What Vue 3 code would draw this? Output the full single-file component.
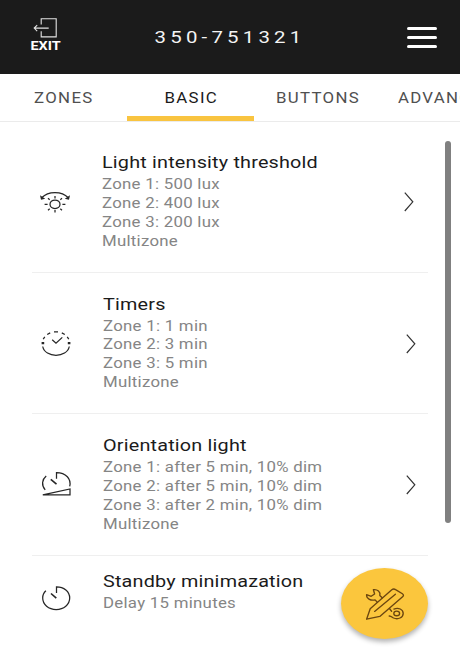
<template>
  <div class="app">
    <header class="topbar">
      <button class="exit">
        <svg width="28" height="21" viewBox="0 0 28 21" fill="none" stroke="#e4e4e4" stroke-width="1.1">
          <path d="M10.2 6.5V.7h15v18.2h-15v-5.6M17.7 10.1H3.2M6.2 7.1L3.2 10.1l3 3" />
        </svg>
        <span class="exit-text">EXIT</span>
      </button>
      <h1 class="device">350-751321</h1>
      <button class="menu">
        <span></span>
        <span></span>
        <span></span>
      </button>
    </header>

    <nav class="tabs">
      <button
        v-for="tab in tabs"
        :key="tab"
        class="tab"
        :class="{ active: tab === activeTab }"
        @click="activeTab = tab"
      >
        <span>{{ tab }}</span>
      </button>
    </nav>

    <main class="list">
      <div v-for="item in items" :key="item.icon" class="item" :class="item.icon">
        <svg class="item-icon" width="32" height="32" viewBox="0 0 32 32" fill="none" stroke="#262626" stroke-width="1.25">
          <template v-if="item.icon === 'light'">
            <ellipse cx="16" cy="18.3" rx="5" ry="4.2" />
            <path d="M16 10v2.4M16 24v2.6M5.6 18.3h3M23.4 18.3h3M9 12.2l1.7 1.5M23 12.2l-1.7 1.5M9 24.3l1.7-1.5M23 24.3l-1.7-1.5" />
            <path d="M3 11.5C9 4.9 23 4.9 29 11.5" />
            <path d="M1 9.2l1 4.6 4.2-1zM31 9.2l-1 4.6-4.2-1z" fill="#262626" stroke="none" />
          </template>
          <template v-else-if="item.icon === 'timers'">
            <path d="M2.7 19.5C5 31.2 27 31.2 29.3 19.5" />
            <path d="M14 4.8h4M7.2 7.5l3-1.6M21.8 5.9l3 1.6M3.2 12.2l1.6-2.4M27.2 9.8l1.6 2.4" />
            <path d="M12.2 12.7l3.8 3.5 6.3-5.8" />
            <path d="M1.6 16.2h2.6M27.8 16.2h2.6" stroke-width="2.2" />
          </template>
          <template v-else-if="item.icon === 'orientation'">
            <path d="M5.2 20.8C1.2 16.2 2 10.5 6.2 7" />
            <path d="M16.5 9.8V3.6c9.5 0 15 6.6 13.2 13.7" />
            <path d="M10.8 10.3l5.7 4.9" stroke-width="1.6" />
            <path d="M2.8 25.8L30 20v5.9z" />
          </template>
          <template v-else>
            <path d="M16.5 12V5.8c7.4 0 13.2 4.7 13.2 11.2S23.8 28.5 16.2 28.5 2.7 23.5 2.7 17c0-3 1.1-5.4 3.2-7.2" />
            <path d="M11 12.5l5.3 4.7" stroke-width="1.6" />
          </template>
        </svg>
        <div class="item-body">
          <h2 class="item-title">{{ item.title }}</h2>
          <p v-for="line in item.lines" :key="line" class="item-line">{{ line }}</p>
        </div>
        <svg v-if="item.link" class="chevron" width="12" height="20" viewBox="0 0 12 20" fill="none" stroke="#333" stroke-width="1.2">
          <path d="M1.8 .6L9.8 9.8 1.8 19" />
        </svg>
      </div>
    </main>

    <div class="scrollbar"></div>

    <button class="fab">
      <svg width="40" height="34" viewBox="0 0 40 34" fill="none" stroke="#6b4610" stroke-width="1.35" stroke-linejoin="round" stroke-linecap="round">
        <path d="M1.6 32.2l3.6-10.4L26.8 2.8q1.8-1.5 3.8-.2l6.8 4.2q2 1.4.2 3L14.8 29.4z" />
        <path d="M9.6 24.4L30.4 7.2" />
        <path d="M12.3 15.2l-2.2-2.3C5.5 13.9 1.2 11.4 1.6 7.6l4.6 1.7 3.4-2.3-1.2-4.3c4-.6 7.4 2.2 6.4 5.7l2.4 2.4" />
        <path d="M24.6 21.8l2 2.4M24.2 29c2.3.2 2.7 1.1 4.4 2 4.4 2 9.6-.5 9.6-4.5 0-4.1-4.8-6.4-9.3-4.4" />
        <ellipse cx="31.7" cy="26.4" rx="2.9" ry="2.3" />
      </svg>
    </button>
  </div>
</template>

<script setup>
import { ref } from "vue";

const tabs = ["ZONES", "BASIC", "BUTTONS", "ADVANCED"];
const activeTab = ref("BASIC");

const items = [
  {
    icon: "light",
    title: "Light intensity threshold",
    lines: ["Zone 1: 500 lux", "Zone 2: 400 lux", "Zone 3: 200 lux", "Multizone"],
    link: true,
  },
  {
    icon: "timers",
    title: "Timers",
    lines: ["Zone 1: 1 min", "Zone 2: 3 min", "Zone 3: 5 min", "Multizone"],
    link: true,
  },
  {
    icon: "orientation",
    title: "Orientation light",
    lines: [
      "Zone 1: after 5 min, 10% dim",
      "Zone 2: after 5 min, 10% dim",
      "Zone 3: after 2 min, 10% dim",
      "Multizone",
    ],
    link: true,
  },
  {
    icon: "standby",
    title: "Standby minimazation",
    lines: ["Delay 15 minutes"],
    link: false,
  },
];
</script>

<style>
body {
  margin: 0;
}
</style>

<style scoped>
.app {
  position: relative;
  width: 460px;
  height: 661px;
  overflow: hidden;
  background-color: #fff;
  font-family: Roboto, "Liberation Sans", sans-serif;
}

button {
  padding: 0;
  border: none;
  background: none;
  font-family: inherit;
  cursor: pointer;
}

.topbar {
  display: grid;
  grid-template-columns: 90px 1fr 90px;
  align-items: center;
  height: 74px;
  background-color: #1b1b1b;
}

.exit {
  display: flex;
  flex-direction: column;
  align-items: center;
  margin-top: -3px;
}

.exit-text {
  margin-left: 1px;
  color: #fff;
  font-size: 12px;
  font-weight: 700;
  line-height: 14px;
  transform: scaleX(1.2);
}

.device {
  margin: 0;
  color: #f4f4f4;
  font-size: 17px;
  font-weight: 400;
  letter-spacing: 3.5px;
  text-align: center;
  transform: scaleX(1.2);
}

.menu {
  display: flex;
  flex-direction: column;
  gap: 6px;
  width: 30px;
  margin-left: 37px;
}

.menu span {
  height: 3px;
  border-radius: 1.5px;
  background-color: #fff;
}

.tabs {
  display: flex;
  height: 48px;
  box-sizing: border-box;
  border-bottom: 1px solid #ebebeb;
}

.tab {
  flex: none;
  width: 127px;
  padding-top: 6px;
  border-bottom: 5px solid transparent;
  color: #505050;
  font-size: 14px;
  letter-spacing: 1.1px;
  text-align: center;
}

.tab span {
  display: inline-block;
  margin-left: 1px;
  transform: scaleX(1.2);
}

.tab:last-child {
  width: 130px;
}

.tab.active {
  border-bottom-color: #f9c440;
  color: #1b1b1b;
}

.list {
  padding: 9px 32px 0;
}

.item {
  display: grid;
  grid-template-columns: 71px 1fr 24px;
  height: 141.5px;
  box-sizing: border-box;
  padding-top: 20px;
  border-bottom: 1px solid #efefef;
}

.item.standby {
  border-bottom: none;
  padding-top: 14px;
}

.item-icon {
  margin: 35px 0 0 8px;
}

.light .item-icon {
  margin-left: 7px;
}

.timers .item-icon {
  margin-top: 34px;
}

.standby .item-icon {
  margin-top: 11px;
}

.item-body {
  transform: scaleX(1.2);
  transform-origin: left;
  white-space: nowrap;
}

.light .item-body {
  margin-left: -1px;
}

.item-title {
  margin: 0;
  color: #1b1b1b;
  font-size: 16.5px;
  font-weight: 400;
  letter-spacing: 0.16px;
  line-height: 24px;
}

.item-line {
  margin: 0;
  color: #858585;
  font-size: 14px;
  letter-spacing: 0.23px;
  line-height: 18.9px;
}

.chevron {
  margin: 41px 0 0 0.5px;
}

.light .chevron {
  margin-left: -1px;
}

.scrollbar {
  position: absolute;
  top: 141px;
  left: 445px;
  width: 6px;
  height: 382px;
  border-radius: 3px;
  background-color: #808080;
}

.fab {
  position: absolute;
  top: 568px;
  left: 341px;
  display: flex;
  align-items: center;
  justify-content: center;
  width: 87px;
  height: 71px;
  border-radius: 50%;
  background-color: #fbc63d;
  box-shadow: 0 3px 5px rgba(0, 0, 0, 0.3);
}
</style>
